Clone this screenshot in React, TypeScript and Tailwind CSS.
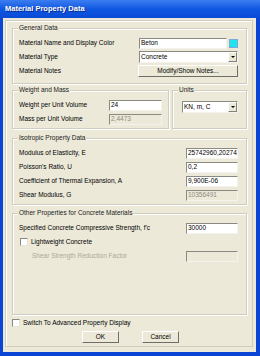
import React from 'react';

const font = { fontFamily: '"Liberation Sans", Arial, sans-serif' };

function Field({ value, w = 'w-[52px]', disabled = false }: { value: string; w?: string; disabled?: boolean }) {
  return (
    <div
      className={`${w} h-[11px] flex items-center px-[1px] border border-t-[#8a8a82] border-l-[#8a8a82] border-b-[#f4f3ee] border-r-[#f4f3ee] text-[6.5px] leading-none overflow-hidden whitespace-nowrap ${
        disabled ? 'bg-[#ece9d8] text-[#8c8a80]' : 'bg-white text-black'
      }`}
    >
      {value}
    </div>
  );
}

function Select({ value, w }: { value: string; w: string }) {
  return (
    <div className={`${w} h-[12px] flex items-center bg-white border border-t-[#8a8a82] border-l-[#8a8a82] border-b-[#f4f3ee] border-r-[#f4f3ee]`}>
      <span className="flex-1 px-[1px] text-[6.5px] leading-none">{value}</span>
      <div className="w-[9px] h-[10px] flex items-center justify-center bg-[#ece9d8] border border-t-white border-l-white border-b-[#808080] border-r-[#808080]">
        <div className="w-0 h-0 border-l-[2px] border-r-[2px] border-t-[2px] border-l-transparent border-r-transparent border-t-black" />
      </div>
    </div>
  );
}

function Check() {
  return <div className="w-[8px] h-[8px] bg-white border border-t-[#8a8a82] border-l-[#8a8a82] border-b-[#e6e4da] border-r-[#e6e4da]" />;
}

function Button({ label, w }: { label: string; w: string }) {
  return (
    <div className={`${w} h-[12px] flex items-center justify-center bg-[#ece9d8] border border-t-white border-l-white border-b-[#6f6d66] border-r-[#6f6d66] text-[6.5px] leading-none`}>
      {label}
    </div>
  );
}

function Group({ title, className, children }: { title: string; className: string; children: React.ReactNode }) {
  return (
    <div className={`relative border border-[#cfcdc0] shadow-[inset_1px_1px_0_#fff,1px_1px_0_#fff] ${className}`}>
      <span className="absolute -top-[5px] left-[5px] px-[1px] bg-[#ece9d8] text-[6.5px] leading-[8px] text-[#222]">{title}</span>
      {children}
    </div>
  );
}

function Row({ label, children }: { label: string; children?: React.ReactNode }) {
  return (
    <div className="h-[14px] flex items-center justify-between">
      <span className="text-[6.5px] leading-none">{label}</span>
      {children}
    </div>
  );
}

export default function App() {
  return (
    <div className="w-[260px] h-[356px] flex flex-col bg-[#0b45d6] text-black" style={font}>
      {/* Title bar */}
      <div className="h-[18px] flex items-center pl-[5px] bg-gradient-to-b from-[#3b7df0] via-[#0f57e2] to-[#0a4ad6]">
        <span className="text-white font-bold text-[7.5px] leading-none [text-shadow:1px_1px_0_#0a2a8a]">Material Property Data</span>
      </div>

      <div className="flex-1 ml-[3px] mr-[4px] mb-[4px] bg-[#ece9d8] pt-[2px] pl-[2px] pr-[3px] pb-[5px]">
        <div className="h-full border border-[#cfcdc0] shadow-[inset_1px_1px_0_#fff] flex flex-col pl-[6px] pr-[5px] pt-[7px]">
          {/* General Data */}
          <Group title="General Data" className="h-[56px] pt-[7px] pl-[6px] pr-[8px]">
            <Row label="Material Name and Display Color">
              <div className="flex items-center gap-[2px]">
                <Field value="Beton" w="w-[88px]" />
                <div className="w-[9px] h-[9px] bg-[#22e4f0] border border-[#7ad]" />
              </div>
            </Row>
            <Row label="Material Type">
              <Select value="Concrete" w="w-[99px]" />
            </Row>
            <Row label="Material Notes">
              <Button label="Modify/Show Notes..." w="w-[100px]" />
            </Row>
          </Group>

          {/* Weight and Mass / Units */}
          <div className="flex mt-[6px] h-[39px]">
            <Group title="Weight and Mass" className="w-[159px] pt-[7px] pl-[6px] pr-[6px]">
              <Row label="Weight per Unit Volume">
                <Field value="24" w="w-[53px]" />
              </Row>
              <Row label="Mass per Unit Volume">
                <Field value="2,4473" w="w-[53px]" disabled />
              </Row>
            </Group>
            <Group title="Units" className="ml-[3px] flex-1 pt-[10px] pl-[9px] pr-[8px]">
              <Select value="KN, m, C" w="w-[56px]" />
            </Group>
          </div>

          {/* Isotropic Property Data */}
          <Group title="Isotropic Property Data" className="mt-[9px] h-[67px] pt-[7px] pl-[6px] pr-[8px]">
            <Row label="Modulus of Elasticity,  E">
              <Field value="25742960,20274" />
            </Row>
            <Row label="Poisson's Ratio,  U">
              <Field value="0,2" />
            </Row>
            <Row label="Coefficient of Thermal Expansion,  A">
              <Field value="9,900E-06" />
            </Row>
            <Row label="Shear Modulus,  G">
              <Field value="10356491" disabled />
            </Row>
          </Group>

          {/* Other Properties */}
          <Group title="Other Properties for Concrete Materials" className="mt-[8px] h-[102px] pt-[7px] pl-[6px] pr-[8px]">
            <Row label="Specified Concrete Compressive Strength,  f'c">
              <Field value="30000" />
            </Row>
            <div className="h-[14px] flex items-center gap-[3px] pl-[1px]">
              <Check />
              <span className="text-[6.5px] leading-none">Lightweight Concrete</span>
            </div>
            <div className="h-[14px] flex items-center justify-between pl-[13px]">
              <span className="text-[6.5px] leading-none text-[#aca899]">Shear Strength Reduction Factor</span>
              <Field value="" disabled />
            </div>
          </Group>

          {/* Bottom */}
          <div className="mt-[3px] h-[10px] flex items-center gap-[3px]">
            <Check />
            <span className="text-[6.5px] leading-none">Switch To Advanced Property Display</span>
          </div>
          <div className="mt-[3px] flex justify-center gap-[23px] pl-[2px]">
            <Button label="OK" w="w-[37px]" />
            <Button label="Cancel" w="w-[37px]" />
          </div>
        </div>
      </div>
    </div>
  );
}
